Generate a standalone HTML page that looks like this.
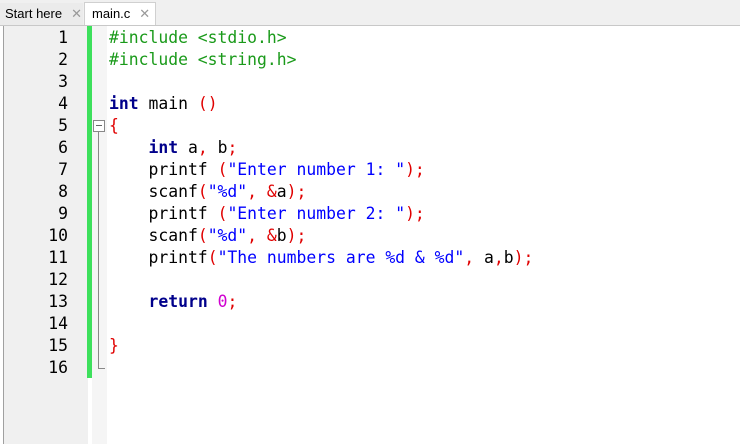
<!DOCTYPE html>
<html><head><style>
body{margin:0;width:740px;height:444px;background:#fff;overflow:hidden;position:relative;font-family:"Liberation Sans",sans-serif}
.tabs{position:absolute;left:0;top:0;width:740px;height:25px;background:#f0f0f0;border-bottom:1px solid #c8c8c8}
.tab{position:absolute;top:3px;height:22px;font-size:13px;line-height:22px;color:#000}
.x{color:#999;margin-left:9px;font-size:13px}
.gut{position:absolute;left:3px;top:26px;width:84px;height:418px;background:#f0f0f0;border-left:1px solid #a0a0a0}
.green{position:absolute;left:87px;top:26px;width:5px;height:352px;background:#3de05c}
.fold{position:absolute;left:92px;top:26px;width:15px;height:418px;background:#f5f5f5}
.code{position:absolute;left:109px;top:27px;font-family:"DejaVu Sans Mono",monospace;font-size:16.4px;line-height:22px;white-space:pre;color:#000}
.num{position:absolute;left:0;top:27px;width:68px;text-align:right;font-family:"DejaVu Sans Mono",monospace;font-size:16.4px;line-height:22px;color:#000;white-space:pre}
.g{color:#1a9a1a}.k{color:#00008b;font-weight:bold}.r{color:#e00000}.s{color:#0000ff}.m{color:#d000d0}
</style></head><body>
<div class="tabs">
<div class="tab" style="left:0;width:83px;padding-left:5px;background:#ebebeb;box-sizing:border-box">Start here<span class="x">✕</span></div>
<div class="tab" style="left:84px;width:72px;padding-left:7px;background:#fff;box-sizing:border-box;border:1px solid #d0d0d0;border-bottom:none;height:23px;top:2px">main.c<span class="x">✕</span></div>
</div>
<div class="gut"></div>
<div class="fold"></div>
<div class="green"></div>
<div style="position:absolute;left:93px;top:120px;width:10px;height:10px;border:1px solid #888;background:#fff"></div>
<div style="position:absolute;left:96px;top:125px;width:6px;height:1px;background:#666"></div>
<div style="position:absolute;left:98px;top:132px;width:1px;height:236px;background:#888"></div>
<div style="position:absolute;left:98px;top:368px;width:7px;height:1px;background:#888"></div>
<div class="num">1
2
3
4
5
6
7
8
9
10
11
12
13
14
15
16</div>
<div class="code"><span class="g">#include &lt;stdio.h&gt;</span>
<span class="g">#include &lt;string.h&gt;</span>

<span class="k">int</span> main <span class="r">()</span>
<span class="r">{</span>
    <span class="k">int</span> a<span class="r">,</span> b<span class="r">;</span>
    printf <span class="r">(</span><span class="s">"Enter number 1: "</span><span class="r">);</span>
    scanf<span class="r">(</span><span class="s">"%d"</span><span class="r">,</span> <span class="r">&amp;</span>a<span class="r">);</span>
    printf <span class="r">(</span><span class="s">"Enter number 2: "</span><span class="r">);</span>
    scanf<span class="r">(</span><span class="s">"%d"</span><span class="r">,</span> <span class="r">&amp;</span>b<span class="r">);</span>
    printf<span class="r">(</span><span class="s">"The numbers are %d &amp; %d"</span><span class="r">,</span> a<span class="r">,</span>b<span class="r">);</span>

    <span class="k">return</span> <span class="m">0</span><span class="r">;</span>

<span class="r">}</span>
</div>
</body></html>
